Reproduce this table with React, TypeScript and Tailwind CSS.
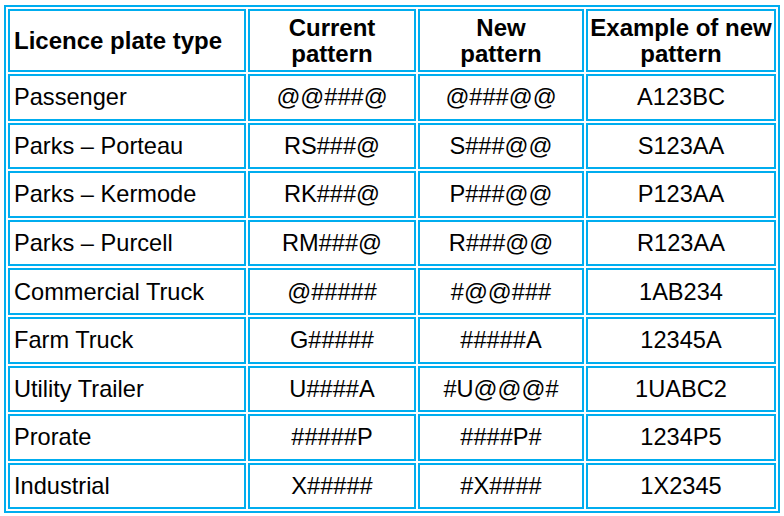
import React from "react";

const rows: [string, string, string, string][] = [
  ["Passenger", "@@###@", "@###@@", "A123BC"],
  ["Parks \u2013 Porteau", "RS###@", "S###@@", "S123AA"],
  ["Parks \u2013 Kermode", "RK###@", "P###@@", "P123AA"],
  ["Parks \u2013 Purcell", "RM###@", "R###@@", "R123AA"],
  ["Commercial Truck", "@#####", "#@@###", "1AB234"],
  ["Farm Truck", "G#####", "#####A", "12345A"],
  ["Utility Trailer", "U####A", "#U@@@#", "1UABC2"],
  ["Prorate", "#####P", "####P#", "1234P5"],
  ["Industrial", "X#####", "#X####", "1X2345"],
];

const cell = "border-2 border-[#00adef] p-0 align-middle";

export default function App() {
  return (
    <div
      className="w-[784px] h-[516px] bg-white overflow-hidden pl-[4px] pt-[5px]"
      style={{ fontFamily: '"Liberation Sans", Arial, sans-serif' }}
    >
      <div className="w-[776px] border-2 border-[#00adef] text-black">
        <table className="w-full table-fixed border-separate border-spacing-[2px]">
          <colgroup>
            <col className="w-[238px]" />
            <col className="w-[168px]" />
            <col className="w-[166px]" />
            <col className="w-[190px]" />
          </colgroup>
          <thead>
            <tr className="h-[63px]">
              <th className={`${cell} text-left pl-[4px] text-[24px] font-bold leading-[26px]`}>
                Licence plate type
              </th>
              <th className={`${cell} text-center text-[24px] font-bold leading-[26px]`}>
                Current
                <br />
                pattern
              </th>
              <th className={`${cell} text-center text-[24px] font-bold leading-[26px]`}>
                New
                <br />
                pattern
              </th>
              <th className={`${cell} text-center text-[24px] font-bold leading-[26px] whitespace-nowrap`}>
                Example of new
                <br />
                pattern
              </th>
            </tr>
          </thead>
          <tbody>
            {rows.map((r) => (
              <tr key={r[0]} className="h-[46.6px]">
                <td className={`${cell} text-left pl-[4px] text-[23.6px] leading-[26px] whitespace-nowrap`}>
                  {r[0]}
                </td>
                <td className={`${cell} text-center text-[23.6px] leading-[26px]`}>{r[1]}</td>
                <td className={`${cell} text-center text-[23.6px] leading-[26px]`}>{r[2]}</td>
                <td className={`${cell} text-center text-[23.6px] leading-[26px]`}>{r[3]}</td>
              </tr>
            ))}
          </tbody>
        </table>
      </div>
    </div>
  );
}
